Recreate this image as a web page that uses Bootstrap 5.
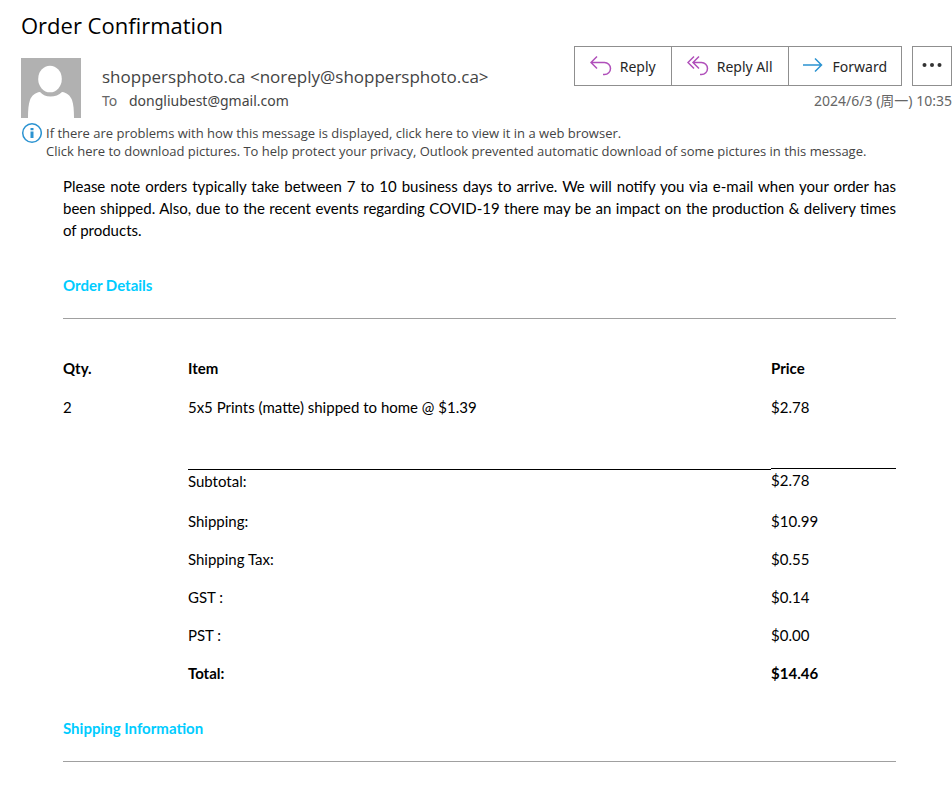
<!DOCTYPE html>
<html lang="en">
<head>
<meta charset="utf-8">
<meta name="viewport" content="width=device-width, initial-scale=1">
<title>Order Confirmation</title>
<link href="https://cdn.jsdelivr.net/npm/bootstrap@5.3.0/dist/css/bootstrap.min.css" rel="stylesheet">
<style>
body { font-family: "Noto Sans", "Noto Sans CJK SC", sans-serif; color: #444; background: #fff; }
.mail-head { padding: 9px 0 0 21px; }
.subject { font-family: "Open Sans", sans-serif; font-size: 22px; line-height: 32px; color: #000; }
.avatar { width: 60px; height: 60px; }
.sender-row { gap: 21px; margin-top: 17px; }
.sender { font-family: "Open Sans", sans-serif; font-size: 17px; line-height: 26px; margin-top: 6px; }
.recipient { font-size: 14px; line-height: 22px; }
.faint { color: #666; }
.actions { gap: 10px; margin-top: 5px; }
.actions .btn { --bs-btn-color: #262626; --bs-btn-border-color: #8f8f8f; --bs-btn-border-radius: 0; --bs-btn-padding-x: 14px; --bs-btn-padding-y: 0; font-size: 14px; height: 40px; }
.actions .reply-btn { --bs-btn-padding-x: 15px; }
.actions .more { width: 40px; padding: 0; }
.sent { font-size: 14px; line-height: 22px; margin-top: 4px; }
.notice { padding: 4px 0 0 21px; font-family: "Open Sans", sans-serif; font-size: 13px; line-height: 18px; }
.notice-text { padding-top: 2px; }
.notice-link, .notice-link:hover { color: #444; text-decoration: none; }
.message { padding: 15px 56px 0 63px; font-family: Lato, "Liberation Sans", sans-serif; font-size: 15px; line-height: 22px; color: #000; }
.intro { text-align: justify; margin-bottom: 33px; }
.section-title { font-size: 15px; line-height: 22px; color: #0cf; margin: 0; }
.rule { margin: 22px 0 30px; border-top: 1px solid #a0a0a0; opacity: 1; }
.order { border-collapse: separate; border-spacing: 0; table-layout: fixed; margin-bottom: 25px; }
.order th, .order td { padding: 8px 0; vertical-align: top; }
.order th { padding-bottom: 9px; }
.order .item-row td { padding-bottom: 50px; }
.order .sum-first td { padding: 0 0 10px; }
.order .line-top { border-top: 1px solid #000; }
.order .line-bottom { border-bottom: 1px solid #000; }
</style>
<script src="https://cdn.jsdelivr.net/npm/bootstrap@5.3.0/dist/js/bootstrap.bundle.min.js"></script>
</head>
<body>
<header class="mail-head d-flex justify-content-between">
  <div>
    <h1 class="subject fw-normal mb-0">Order Confirmation</h1>
    <div class="sender-row d-flex">
      <svg class="avatar flex-shrink-0" viewBox="0 0 60 60" role="img" aria-label="Sender">
        <path fill="#b1b1b1" d="M0 0h60v60H0z"/>
        <path fill="#fff" d="M7 60c0-8 .5-14 2-18 1.500-4 5-7.500 10-8 3 3 6 4.500 10.500 4.500S38 37 41 34c5 .5 8.500 4 10 8s2 10 2 18z"/>
        <ellipse cx="29" cy="21.500" rx="12.800" ry="14.800" fill="#b1b1b1"/>
        <ellipse cx="29" cy="21" rx="11.800" ry="13.300" fill="#fff"/>
      </svg>
      <div class="text-nowrap">
        <div class="sender">shoppersphoto.ca &lt;noreply@shoppersphoto.ca&gt;</div>
        <div class="recipient"><span class="faint me-2">To</span> dongliubest@gmail.com</div>
      </div>
    </div>
  </div>
  <div class="pt-3 mt-3 text-nowrap">
    <div class="actions d-flex justify-content-end">
      <div class="btn-group" role="group" aria-label="Respond">
        <button type="button" class="btn reply-btn d-flex align-items-center gap-2"><svg width="22" height="22" viewBox="0 0 22 22" fill="none" stroke="#b04fba" stroke-width="1.5"><path d="M7 1.500 1 7.500l6 6M1 7.500h13.500a5.800 5.800 0 0 1 0 12H13"/></svg>Reply</button>
        <button type="button" class="btn reply-btn d-flex align-items-center gap-2"><svg width="22" height="22" viewBox="0 0 22 22" fill="none" stroke="#b04fba" stroke-width="1.5"><path d="M7 1.500 1 7.500l6 6M12 1.500 6 7.500l6 6M6 7.500h8.500a5.800 5.800 0 0 1 0 12H13"/></svg>Reply All</button>
        <button type="button" class="btn d-flex align-items-center gap-2"><svg width="22" height="22" viewBox="0 0 22 22" fill="none" stroke="#2b93d1" stroke-width="1.5"><path d="M0 10h18.500M12 3.500 18.500 10 12 16.500"/></svg>Forward</button>
      </div>
      <button type="button" class="btn more d-flex align-items-center justify-content-center" aria-label="More actions"><svg width="20" height="8" viewBox="0 0 20 8" fill="#333"><circle cx="2.500" cy="3" r="2"/><circle cx="10" cy="3" r="2"/><circle cx="17.500" cy="3" r="2"/></svg></button>
    </div>
    <div class="sent faint text-end">2024/6/3 (周一) 10:35</div>
  </div>
</header>
<div class="notice d-flex gap-1">
  <svg class="flex-shrink-0" width="21" height="22" viewBox="0 0 21 22" aria-hidden="true"><circle cx="11" cy="11" r="9.300" fill="none" stroke="#2b93d1" stroke-width="1.500"/><path fill="#2b93d1" d="M9.500 6h3v2.200h-3zM9.500 9.500h3V16h-3z"/></svg>
  <div class="notice-text">
    <a class="notice-link d-block" href="#">If there are problems with how this message is displayed, click here to view it in a web browser.</a>
    <a class="notice-link d-block" href="#">Click here to download pictures. To help protect your privacy, Outlook prevented automatic download of some pictures in this message.</a>
  </div>
</div>
<main class="message">
  <p class="intro">Please note orders typically take between 7 to 10 business days to arrive. We will notify you via e-mail when your order has been shipped. Also, due to the recent events regarding COVID-19 there may be an impact on the production &amp; delivery times of products.</p>
  <h2 class="section-title fw-bold">Order Details</h2>
  <hr class="rule">
  <table class="order w-100">
    <colgroup><col style="width:15%"><col style="width:70%"><col style="width:15%"></colgroup>
    <thead><tr><th scope="col">Qty.</th><th scope="col">Item</th><th scope="col">Price</th></tr></thead>
    <tbody>
      <tr class="item-row"><td>2</td><td>5x5 Prints (matte) shipped to home @ $1.39</td><td class="line-bottom">$2.78</td></tr>
      <tr class="sum-first"><td></td><td class="line-top">Subtotal:</td><td>$2.78</td></tr>
      <tr><td></td><td>Shipping:</td><td>$10.99</td></tr>
      <tr><td></td><td>Shipping Tax:</td><td>$0.55</td></tr>
      <tr><td></td><td>GST :</td><td>$0.14</td></tr>
      <tr><td></td><td>PST :</td><td>$0.00</td></tr>
      <tr class="fw-bold"><td></td><td>Total:</td><td>$14.46</td></tr>
    </tbody>
  </table>
  <h2 class="section-title fw-bold">Shipping Information</h2>
  <hr class="rule">
</main>
</body>
</html>
